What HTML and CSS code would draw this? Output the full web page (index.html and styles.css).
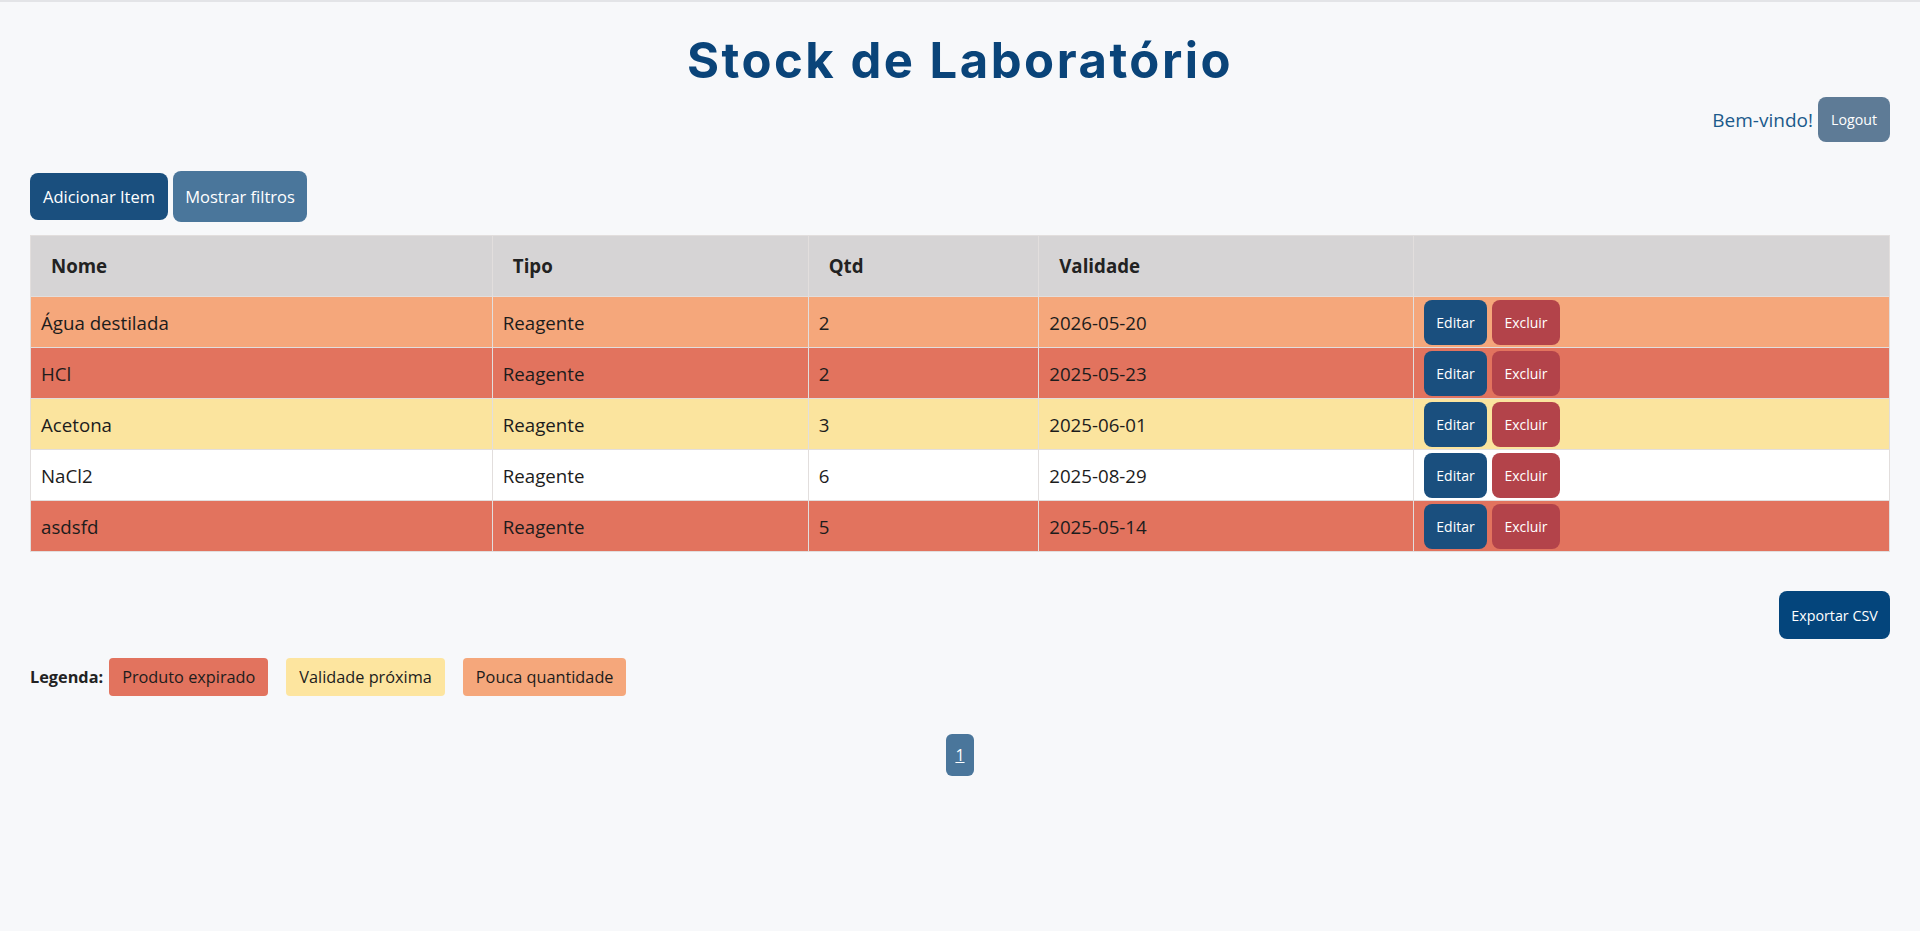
FILE: index.html
```html
<!DOCTYPE html>
<html lang="pt">
<head>
<meta charset="utf-8">
<title>Stock de Laboratório</title>
<link rel="stylesheet" href="styles.css">
</head>
<body>
<div class="page">
  <h1 class="title">Stock de Laboratório</h1>
  <div class="welcome">
    <span class="welcome-text">Bem-vindo!</span>
    <button class="btn btn-logout">Logout</button>
  </div>
  <div class="actions">
    <button class="btn btn-add">Adicionar Item</button>
    <button class="btn btn-filter">Mostrar filtros</button>
  </div>
  <table class="stock">
    <thead>
      <tr>
        <th class="c-nome">Nome</th>
        <th class="c-tipo">Tipo</th>
        <th class="c-qtd">Qtd</th>
        <th class="c-val">Validade</th>
        <th class="c-act"></th>
      </tr>
    </thead>
    <tbody>
      <tr class="low">
        <td>Água destilada</td><td>Reagente</td><td>2</td><td>2026-05-20</td>
        <td><div class="row-actions"><button class="btn btn-sm btn-edit">Editar</button><button class="btn btn-sm btn-del">Excluir</button></div></td>
      </tr>
      <tr class="expired">
        <td>HCl</td><td>Reagente</td><td>2</td><td>2025-05-23</td>
        <td><div class="row-actions"><button class="btn btn-sm btn-edit">Editar</button><button class="btn btn-sm btn-del">Excluir</button></div></td>
      </tr>
      <tr class="near">
        <td>Acetona</td><td>Reagente</td><td>3</td><td>2025-06-01</td>
        <td><div class="row-actions"><button class="btn btn-sm btn-edit">Editar</button><button class="btn btn-sm btn-del">Excluir</button></div></td>
      </tr>
      <tr class="ok">
        <td>NaCl2</td><td>Reagente</td><td>6</td><td>2025-08-29</td>
        <td><div class="row-actions"><button class="btn btn-sm btn-edit">Editar</button><button class="btn btn-sm btn-del">Excluir</button></div></td>
      </tr>
      <tr class="expired">
        <td>asdsfd</td><td>Reagente</td><td>5</td><td>2025-05-14</td>
        <td><div class="row-actions"><button class="btn btn-sm btn-edit">Editar</button><button class="btn btn-sm btn-del">Excluir</button></div></td>
      </tr>
    </tbody>
  </table>
  <div class="export-row">
    <button class="btn btn-export">Exportar CSV</button>
  </div>
  <div class="legend">
    <strong class="legend-label">Legenda:</strong>
    <span class="tag tag-expired">Produto expirado</span>
    <span class="tag tag-near">Validade próxima</span>
    <span class="tag tag-low">Pouca quantidade</span>
  </div>
  <div class="pagination">
    <a class="page-link" href="#">1</a>
  </div>
</div>
</body>
</html>
```
FILE: styles.css
```css
* { box-sizing: border-box; }
html, body { margin: 0; padding: 0; }
body {
  background: #f7f8fa;
  border-top: 2px solid #e3e4e7;
  font-family: "Open Sans", "Noto Sans", sans-serif;
  color: #212529;
  min-height: 100vh;
}
.page { padding: 0 30px; }

.title {
  margin: 29px 0 0;
  font-family: Inter, "Open Sans", sans-serif;
  font-weight: 700;
  font-size: 49px;
  line-height: 60px;
  letter-spacing: 2.5px;
  color: #0a4479;
  text-align: center;
}

.btn {
  border: none;
  color: #fff;
  font-family: "Open Sans", "Noto Sans", sans-serif;
  border-radius: 8px;
  cursor: pointer;
  padding: 0;
}

.welcome {
  margin-top: 6px;
  display: flex;
  justify-content: flex-end;
  align-items: center;
  gap: 5px;
}
.welcome-text { font-size: 19px; color: #1b5a8b; }
.btn-logout {
  background: #5e7b96;
  height: 45px;
  width: 72px;
  font-size: 14.2px;
}

.actions {
  margin-top: 29px;
  display: flex;
  align-items: center;
  gap: 5px;
}
.btn-add {
  background: #1a4f7e;
  height: 47px;
  width: 138px;
  font-size: 16.5px;
}
.btn-filter {
  background: #4a769b;
  height: 51px;
  width: 134px;
  font-size: 16.5px;
}

.stock {
  margin-top: 13px;
  width: 100%;
  border-collapse: collapse;
  border: 1px solid #dedede;
  font-size: 18.7px;
}
.stock th, .stock td { border: 1px solid #e2dedd; text-align: left; }
.stock th {
  background: #d6d4d5;
  color: #222;
  font-weight: 700;
  padding: 20px 20px;
  line-height: 20px;
}
.stock td {
  padding: 3px 10px 2px;
  color: #1c1c1c;
  line-height: 20px;
}
.c-nome { width: 24.84%; }
.c-tipo { width: 16.99%; }
.c-qtd { width: 12.4%; }
.c-val { width: 20.16%; }
.c-act { width: 25.6%; }

.stock tr.low td { background: #f5a77b; }
.stock tr.expired td { background: #e2735e; }
.stock tr.near td { background: #fbe49e; }
.stock tr.ok td { background: #ffffff; }

.row-actions { display: flex; gap: 5px; }
.btn-sm { height: 45px; font-size: 14px; }
.btn-edit { background: #1a4f7e; width: 63px; }
.btn-del { background: #b3434a; width: 68px; }

.export-row {
  margin-top: 39px;
  display: flex;
  justify-content: flex-end;
}
.btn-export {
  background: #04457c;
  height: 48px;
  width: 111px;
  font-size: 14.3px;
}

.legend {
  margin-top: 19px;
  display: flex;
  align-items: center;
  font-size: 16.3px;
}
.legend-label { margin-right: 6px; color: #222; }
.tag {
  height: 38px;
  display: inline-flex;
  align-items: center;
  padding: 0 13px;
  border-radius: 4px;
  color: #1c1c1c;
  margin-right: 18px;
}
.tag-expired { background: #e2735e; }
.tag-near { background: #fde59f; }
.tag-low { background: #f5a77b; }

.pagination {
  margin-top: 38px;
  display: flex;
  justify-content: center;
}
.page-link {
  display: inline-flex;
  align-items: center;
  justify-content: center;
  width: 28px;
  height: 42px;
  background: #4a769b;
  color: #fff;
  border-radius: 6px;
  font-size: 16px;
}
```
